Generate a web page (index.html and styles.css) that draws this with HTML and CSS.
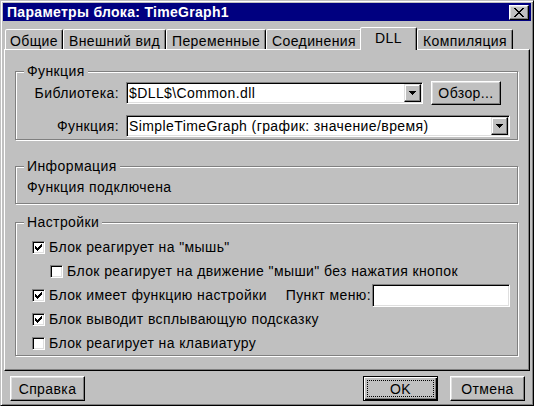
FILE: index.html
```html
<!DOCTYPE html>
<html>
<head>
<meta charset="utf-8">
<link rel="stylesheet" href="styles.css">
</head>
<body>
<div class="window">
  <div class="titlebar">
    <span class="title">Параметры блока: TimeGraph1</span>
    <div class="close">
      <svg width="10" height="9" viewBox="0 0 10 9" shape-rendering="crispEdges"><path fill="#000" d="M0 0h2v1H0zM8 0h2v1H8zM1 1h2v1H1zM7 1h2v1H7zM2 2h2v1H2zM6 2h2v1H6zM3 3h4v1H3zM4 4h2v1H4zM3 5h4v1H3zM2 6h2v1H2zM6 6h2v1H6zM1 7h2v1H1zM7 7h2v1H7zM0 8h2v1H0zM8 8h2v1H8z"/></svg>
    </div>
  </div>

  <div class="tabs">
    <div class="tab tab-general">Общие</div>
    <div class="tab tab-look">Внешний вид</div>
    <div class="tab tab-vars">Переменные</div>
    <div class="tab tab-links">Соединения</div>
    <div class="tab tab-dll active">DLL</div>
    <div class="tab tab-build">Компиляция</div>
  </div>

  <div class="panel">
    <div class="group group-func">
      <span class="legend">Функция</span>
      <div class="frow">
        <span class="flabel">Библиотека:</span>
        <div class="combo combo-lib">
          <span class="ctext">$DLL$\Common.dll</span>
          <span class="dd"><svg width="7" height="4" viewBox="0 0 7 4" shape-rendering="crispEdges"><path fill="#000" d="M0 0h7v1H0zM1 1h5v1H1zM2 2h3v1H2zM3 3h1v1H3z"/></svg></span>
        </div>
        <div class="btn btn-browse">Обзор...</div>
      </div>
      <div class="frow frow-2">
        <span class="flabel">Функция:</span>
        <div class="combo combo-fn">
          <span class="ctext">SimpleTimeGraph (график: значение/время)</span>
          <span class="dd"><svg width="7" height="4" viewBox="0 0 7 4" shape-rendering="crispEdges"><path fill="#000" d="M0 0h7v1H0zM1 1h5v1H1zM2 2h3v1H2zM3 3h1v1H3z"/></svg></span>
        </div>
      </div>
    </div>

    <div class="group group-info">
      <span class="legend">Информация</span>
      <div class="info-text">Функция подключена</div>
    </div>

    <div class="group group-set">
      <span class="legend">Настройки</span>
      <div class="crow">
        <span class="cb"><svg width="9" height="9" viewBox="0 0 9 9" shape-rendering="crispEdges"><path fill="#000" d="M1 3h1v3H1zM2 4h1v3H2zM3 5h1v3H3zM4 4h1v3H4zM5 3h1v3H5zM6 2h1v3H6zM7 1h1v3H7z"/></svg></span>
        <span class="ctxt">Блок реагирует на "мышь"</span>
      </div>
      <div class="crow crow-indent">
        <span class="cb"></span>
        <span class="ctxt">Блок реагирует на движение "мыши" без нажатия кнопок</span>
      </div>
      <div class="crow">
        <span class="cb"><svg width="9" height="9" viewBox="0 0 9 9" shape-rendering="crispEdges"><path fill="#000" d="M1 3h1v3H1zM2 4h1v3H2zM3 5h1v3H3zM4 4h1v3H4zM5 3h1v3H5zM6 2h1v3H6zM7 1h1v3H7z"/></svg></span>
        <span class="ctxt">Блок имеет функцию настройки</span>
        <span class="menu-label">Пункт меню:</span>
        <span class="edit"></span>
      </div>
      <div class="crow">
        <span class="cb"><svg width="9" height="9" viewBox="0 0 9 9" shape-rendering="crispEdges"><path fill="#000" d="M1 3h1v3H1zM2 4h1v3H2zM3 5h1v3H3zM4 4h1v3H4zM5 3h1v3H5zM6 2h1v3H6zM7 1h1v3H7z"/></svg></span>
        <span class="ctxt">Блок выводит всплывающую подсказку</span>
      </div>
      <div class="crow">
        <span class="cb"></span>
        <span class="ctxt">Блок реагирует на клавиатуру</span>
      </div>
    </div>
  </div>

  <div class="footer">
    <div class="btn btn-std">Справка</div>
    <div class="spacer"></div>
    <div class="btn btn-std btn-default"><span class="focus">OK</span></div>
    <div class="btn btn-std btn-cancel">Отмена</div>
  </div>
</div>
</body>
</html>
```

FILE: styles.css
```css
* { box-sizing: border-box; }

html, body {
  margin: 0;
  padding: 0;
  background: #c0c0c0;
}

body {
  font-family: "Liberation Sans", Arial, sans-serif;
  font-size: 14px;
  letter-spacing: 0.4px;
  color: #000;
}

.window {
  width: 534px;
  height: 406px;
  background: #c0c0c0;
  border: 1px solid;
  border-color: #c0c0c0 #000 #000 #c0c0c0;
  box-shadow: inset 1px 1px 0 #fff, inset -1px -1px 0 #808080;
  padding: 2px;
  display: flex;
  flex-direction: column;
}

/* title bar */
.titlebar {
  height: 18px;
  flex: none;
  background: #000080;
  color: #fff;
  display: flex;
  justify-content: space-between;
  align-items: flex-start;
  padding: 0 2px 0 3px;
}

.title {
  font-weight: bold;
  font-size: 14px;
  line-height: 18px;
  letter-spacing: 0.3px;
  padding-left: 1px;
}

.close {
  margin-top: 2px;
  width: 20px;
  height: 15px;
  background: #c0c0c0;
  border: 1px solid;
  border-color: #fff #000 #000 #fff;
  box-shadow: inset -1px -1px 0 #808080, inset 1px 1px 0 #dfdfdf;
  display: flex;
  align-items: center;
  justify-content: center;
  padding-left: 0;
}

/* tabs */
.tabs {
  height: 28px;
  flex: none;
  display: flex;
  align-items: flex-end;
  padding-left: 2px;
}

.tab {
  height: 20px;
  border: 1px solid;
  border-bottom: none;
  border-color: #fff #000 transparent #fff;
  border-radius: 2px 2px 0 0;
  box-shadow: inset -1px 0 0 #808080;
  display: flex;
  align-items: center;
  justify-content: center;
  padding-top: 2px;
  background: #c0c0c0;
  white-space: nowrap;
}

.tab-general { width: 58px; }
.tab-look { width: 103px; }
.tab-vars { width: 100px; }
.tab-links { width: 96px; }
.tab-dll { width: 57px; }
.tab-build { width: 96px; }

.tab.active {
  height: 23px;
  margin-left: -2px;
  margin-bottom: -1px;
  position: relative;
  z-index: 2;
  padding-top: 0;
  padding-bottom: 2px;
}

/* panel */
.panel {
  flex: none;
  height: 322px;
  margin: 0 1px;
  border: 1px solid;
  border-color: #fff #000 #000 #fff;
  box-shadow: inset -1px -1px 0 #808080;
  padding-top: 21px;
  display: flex;
  flex-direction: column;
}

.group {
  position: relative;
  margin: 0 11px 0 10px;
  border: 1px solid #808080;
  box-shadow: inset 1px 1px 0 #fff, 1px 1px 0 #fff;
  flex: none;
}

.legend {
  position: absolute;
  top: -9px;
  left: 8px;
  padding: 0 3px;
  background: #c0c0c0;
  line-height: 16px;
}

.group-func {
  height: 69px;
  padding: 10px 0 0 0;
}

.frow {
  display: flex;
  align-items: center;
  height: 22px;
}

.frow-2 { margin-top: 11px; }

.flabel {
  width: 103px;
  text-align: right;
  margin-right: 7px;
  white-space: nowrap;
}

.combo {
  height: 22px;
  background: #fff;
  border: 1px solid;
  border-color: #808080 #fff #fff #808080;
  box-shadow: inset 1px 1px 0 #000, inset -1px -1px 0 #dfdfdf;
  padding: 1px;
  display: flex;
  align-items: center;
}

.combo-lib { width: 297px; }
.combo-fn { width: 384px; }

.ctext {
  flex: 1;
  padding-left: 1px;
  white-space: nowrap;
  overflow: hidden;
}

.dd {
  width: 17px;
  height: 18px;
  flex: none;
  background: #c0c0c0;
  border: 1px solid;
  border-color: #dfdfdf #000 #000 #dfdfdf;
  box-shadow: inset -1px -1px 0 #808080, inset 1px 1px 0 #fff;
  display: flex;
  align-items: center;
  justify-content: center;
}

.btn {
  background: #c0c0c0;
  border: 1px solid;
  border-color: #fff #000 #000 #fff;
  box-shadow: inset -1px -1px 0 #808080, inset 1px 1px 0 #dfdfdf;
  display: flex;
  align-items: center;
  justify-content: center;
  white-space: nowrap;
  flex: none;
}

.btn-browse {
  width: 70px;
  height: 24px;
  margin-left: 8px;
}

.group-info {
  margin-top: 26px;
  height: 38px;
  padding: 12px 0 0 11px;
}

.info-text {
  line-height: 16px;
}

.group-set {
  margin-top: 18px;
  height: 134px;
  padding: 12px 7px 0 16px;
}

.crow {
  display: flex;
  align-items: center;
  height: 24px;
}

.crow-indent { padding-left: 18px; }

.cb {
  width: 13px;
  height: 13px;
  flex: none;
  background: #fff;
  border: 1px solid;
  border-color: #808080 #fff #fff #808080;
  box-shadow: inset 1px 1px 0 #000, inset -1px -1px 0 #dfdfdf;
  padding: 1px;
  display: flex;
}

.ctxt {
  margin-left: 4px;
  white-space: nowrap;
}

.menu-label {
  margin-left: auto;
  margin-right: 1px;
  white-space: nowrap;
}

.edit {
  width: 138px;
  height: 23px;
  background: #fff;
  border: 1px solid;
  border-color: #808080 #fff #fff #808080;
  box-shadow: inset 1px 1px 0 #000, inset -1px -1px 0 #dfdfdf;
}

/* footer */
.footer {
  flex: 1;
  display: flex;
  align-items: flex-start;
  padding: 5px 6px 0 7px;
}

.spacer { flex: 1; }

.btn-std {
  width: 75px;
  height: 25px;
}

.btn-default {
  border-color: #000;
  box-shadow: inset 1px 1px 0 #fff, inset -1px -1px 0 #000, inset -2px -2px 0 #808080;
  padding: 3px;
}

.focus {
  flex: 1;
  align-self: stretch;
  border: 1px dotted #000;
  display: flex;
  align-items: center;
  justify-content: center;
}

.btn-cancel { margin-left: 12px; }
```
